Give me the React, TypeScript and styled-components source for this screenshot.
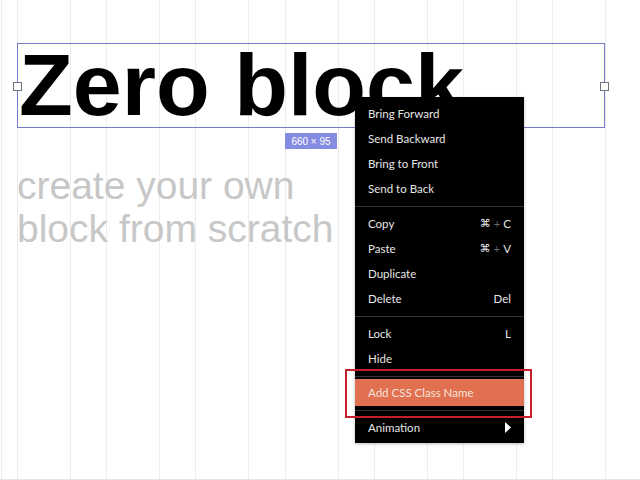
import React from "react";
import styled, { createGlobalStyle } from "styled-components";

const GlobalStyle = createGlobalStyle`
  html, body {
    margin: 0;
    padding: 0;
    background: #fff;
  }
`;

const Canvas = styled.div`
  position: relative;
  width: 640px;
  height: 480px;
  box-sizing: border-box;
  overflow: hidden;
  padding: 43px 35px 0 17px;
  border-bottom: 1px solid #e4e4e4;
  background-color: #fff;
  background-image: repeating-linear-gradient(
    to right,
    #ececec 0 1px,
    transparent 1px 53px,
    #ececec 53px 54px,
    transparent 54px 89.2px
  );
  background-position: 17px 0;
`;

const Artboard = styled.div`
  width: 588px;
  display: flex;
  flex-direction: column;
  align-items: flex-start;
`;

const Selection = styled.div`
  position: relative;
  width: 100%;
  height: 85px;
  box-sizing: border-box;
  border: 1px solid #7479c9;
  padding-left: 1px;
`;

const Handle = styled.span<{ $side: "left" | "right" }>`
  position: absolute;
  top: 38px;
  ${(p) => (p.$side === "left" ? "left: -5px;" : "right: -5px;")}
  width: 7px;
  height: 7px;
  background: #fff;
  border: 1px solid #6f7380;
`;

const Title = styled.div`
  margin-top: -3px;
  font-family: "Liberation Sans", Arial, sans-serif;
  font-weight: 700;
  font-size: 88px;
  line-height: 88px;
  color: #000;
  white-space: nowrap;
`;

const SizeTag = styled.div`
  align-self: center;
  margin-top: 5px;
  height: 16px;
  padding: 0 6px;
  display: flex;
  align-items: center;
  background: #858be0;
  color: #fff;
  font-family: "Liberation Sans", Arial, sans-serif;
  font-size: 10px;
`;

const Subtitle = styled.div`
  margin-top: 15px;
  font-family: "Liberation Sans", Arial, sans-serif;
  font-size: 39px;
  line-height: 43px;
  color: #c7c7c7;
`;

const Menu = styled.div`
  position: absolute;
  left: 355px;
  top: 97px;
  width: 169px;
  background: #000;
  font-family: Lato, "Open Sans", sans-serif;
  font-size: 11.5px;
  color: #e6e6e6;
  box-shadow: 0 1px 3px rgba(0, 0, 0, 0.25);
`;

const Section = styled.div<{ $marked?: boolean }>`
  position: relative;
  padding: ${(p) => (p.$marked ? "2px 0 4px" : "4px 0 5px")};
  & + & {
    border-top: 1px solid #333;
  }
  &:last-child {
    padding-bottom: 3px;
  }
  ${(p) =>
    p.$marked &&
    `
    &::after {
      content: "";
      position: absolute;
      left: -10px;
      right: -8px;
      top: -8px;
      bottom: -8px;
      border: 2px solid #c41f2b;
      pointer-events: none;
    }
  `}
`;

const Item = styled.div<{ $active?: boolean }>`
  height: ${(p) => (p.$active ? "27px" : "25px")};
  padding: 0 13px;
  display: flex;
  align-items: center;
  justify-content: space-between;
  background: ${(p) => (p.$active ? "#e0704f" : "transparent")};
  color: ${(p) => (p.$active ? "#f6e4dc" : "#e6e6e6")};
`;

const Shortcut = styled.span`
  display: flex;
  align-items: center;
  gap: 3px;
  color: #e6e6e6;
`;

const Cmd = styled.span`
  font-family: "DejaVu Sans", sans-serif;
  font-size: 11px;
`;

const Plus = styled.span`
  color: #6a6a6a;
`;

const Arrow = () => (
  <svg width="6" height="11" viewBox="0 0 6 11">
    <polygon points="0,0 6,5.5 0,11" fill="#fff" />
  </svg>
);

type MenuItem = { label: string; keys?: string; active?: boolean; sub?: boolean };

const sections: { items: MenuItem[]; marked?: boolean }[] = [
  {
    items: [
      { label: "Bring Forward" },
      { label: "Send Backward" },
      { label: "Bring to Front" },
      { label: "Send to Back" },
    ],
  },
  {
    items: [
      { label: "Copy", keys: "⌘C" },
      { label: "Paste", keys: "⌘V" },
      { label: "Duplicate" },
      { label: "Delete", keys: "Del" },
    ],
  },
  { items: [{ label: "Lock", keys: "L" }, { label: "Hide" }] },
  { items: [{ label: "Add CSS Class Name", active: true }], marked: true },
  { items: [{ label: "Animation", sub: true }] },
];

const renderKeys = (keys: string) => {
  if (keys.startsWith("⌘")) {
    return (
      <Shortcut>
        <Cmd>⌘</Cmd>
        <Plus>+</Plus>
        <span>{keys.slice(1)}</span>
      </Shortcut>
    );
  }
  return <Shortcut>{keys}</Shortcut>;
};

const App = () => {
  return (
    <>
      <GlobalStyle />
      <Canvas>
        <Artboard>
          <Selection>
            <Handle $side="left" />
            <Handle $side="right" />
            <Title>Zero block</Title>
          </Selection>
          <SizeTag>660 × 95</SizeTag>
          <Subtitle>
            create your own
            <br />
            block from scratch
          </Subtitle>
        </Artboard>

        <Menu>
          {sections.map((section, i) => (
            <Section key={i} $marked={section.marked}>
              {section.items.map((item) => (
                <Item key={item.label} $active={item.active}>
                  <span>{item.label}</span>
                  {item.keys && renderKeys(item.keys)}
                  {item.sub && <Arrow />}
                </Item>
              ))}
            </Section>
          ))}
        </Menu>
      </Canvas>
    </>
  );
};

export default App;
